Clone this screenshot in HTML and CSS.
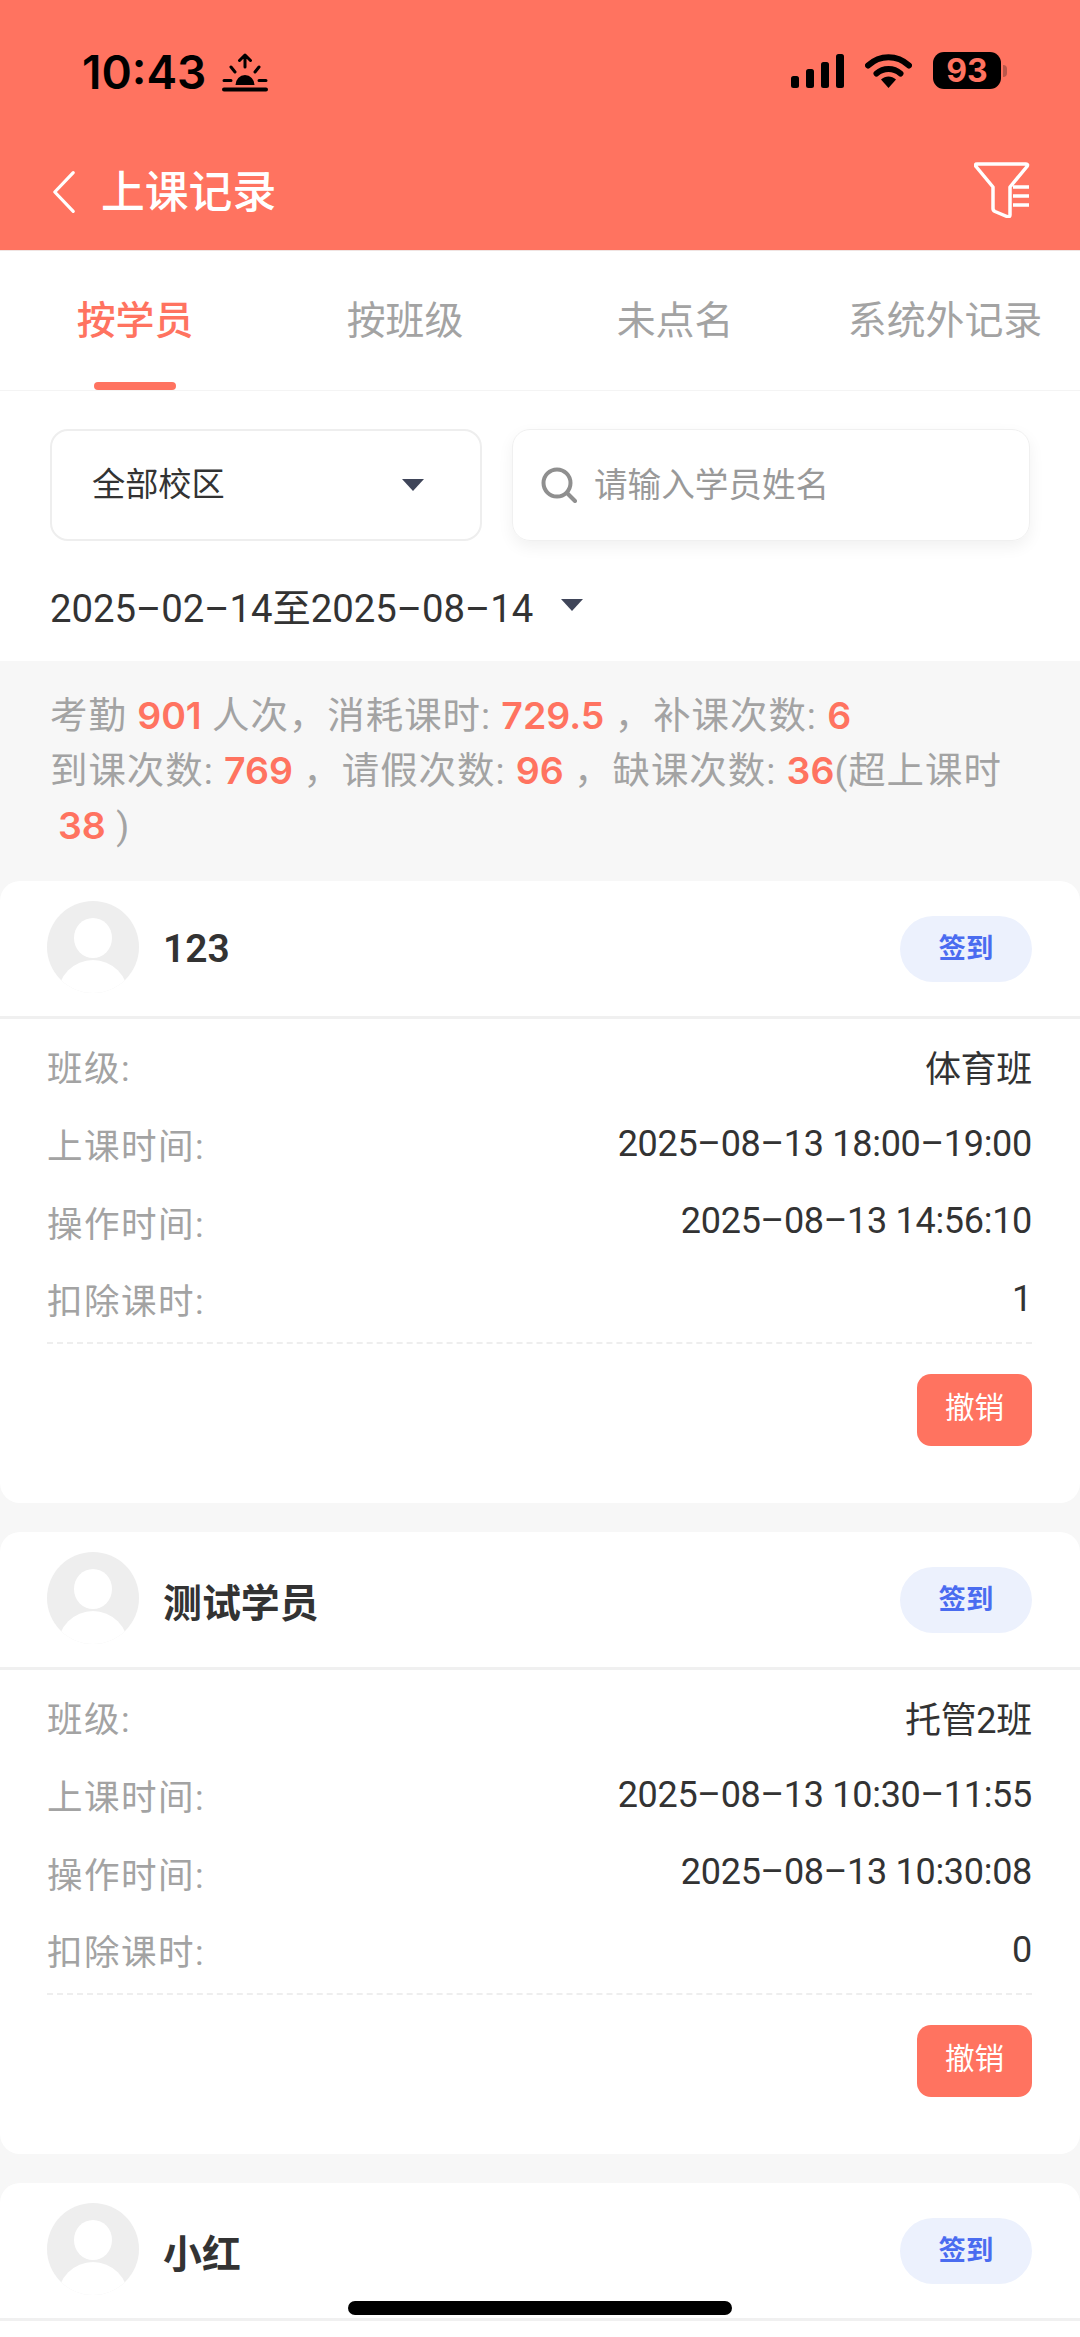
FILE: index.html
```html
<!DOCTYPE html>
<html lang="zh-CN">
<head>
  <meta charset="UTF-8">
  <meta name="viewport" content="width=device-width, initial-scale=1.0">
  <title>上课记录</title>
  <link rel="stylesheet" href="styles.css">
</head>
<body>
  <div id="page">
    <header class="top">
      <div class="status">
        <div class="status-left">
          <span class="clock">10:43</span>
          <svg class="sun" viewBox="0 0 46 39">
            <path d="M23 2v12M17.500 7.500L23 2l5.500 5.500M9 14l4 5M37 14l-4 5M2 27.500h7M37 27.500h7" fill="none" stroke="#000" stroke-width="3" stroke-linecap="round" stroke-linejoin="round"/>
            <path d="M13.500 32a9.500 10 0 0 1 19 0z" fill="#000"/>
            <rect x="0" y="34.500" width="46" height="4" rx="2" fill="#000"/>
          </svg>
        </div>
        <div class="status-right">
          <svg class="signal" viewBox="0 0 53 34">
            <rect x="0" y="22" width="8" height="12" rx="2.5"/>
            <rect x="15" y="15" width="8" height="19" rx="2.5"/>
            <rect x="30" y="8" width="8" height="26" rx="2.5"/>
            <rect x="45" y="0" width="8" height="34" rx="2.5"/>
          </svg>
          <svg class="wifi" viewBox="0 0 47 34">
            <path d="M3 11.500C15 .5 32 .5 44 11.500" fill="none" stroke="#000" stroke-width="6" stroke-linecap="round"/>
            <path d="M11.500 19.500C18.500 13.500 28.500 13.500 35.500 19.500" fill="none" stroke="#000" stroke-width="6" stroke-linecap="round"/>
            <path d="M16 25.500C20.500 21.500 26.500 21.500 31 25.500L23.500 34z" fill="#000"/>
          </svg>
          <div class="battery"><span class="battery-num">93</span></div>
          <span class="battery-nub"></span>
        </div>
      </div>
      <div class="nav">
        <div class="nav-left">
          <svg class="back" viewBox="0 0 26 46">
            <path d="M23 2L3 23l20 21" fill="none" stroke="#fff" stroke-width="3.500" stroke-linecap="round" stroke-linejoin="round"/>
          </svg>
          <span class="nav-title">上课记录</span>
        </div>
        <svg class="filter" viewBox="0 0 56 56">
          <path d="M3 2h49q2.500 0 1 2.500L36 25v28q0 2.500-3 1.500l-12-5q-2-1-2-3V25L2 4.500Q.5 2 3 2z" fill="none" stroke="#fff" stroke-width="3.500" stroke-linejoin="round"/>
          <path d="M39 25h16M39 34h16M39 43h16" fill="none" stroke="#fff" stroke-width="3.500"/>
        </svg>
      </div>
    </header>

    <ul class="tabs">
      <li class="tab active">按学员</li>
      <li class="tab">按班级</li>
      <li class="tab">未点名</li>
      <li class="tab">系统外记录</li>
    </ul>

    <div class="filters">
      <div class="select">
        <span>全部校区</span>
        <i class="caret"></i>
      </div>
      <div class="search">
        <svg class="search-icon" viewBox="0 0 36 36">
          <circle cx="16" cy="16" r="13.500" fill="none" stroke="#8f8f8f" stroke-width="4"/>
          <path d="M26 26l8 8" fill="none" stroke="#8f8f8f" stroke-width="4" stroke-linecap="round"/>
        </svg>
        <span>请输入学员姓名</span>
      </div>
    </div>

    <div class="date-row">
      <span>2025–02–14至2025–08–14</span>
      <i class="caret"></i>
    </div>

    <div class="content">
      <div class="summary">
        考勤 <b>901</b> 人次，消耗课时: <b>729.5</b> ，补课次数: <b>6</b><br>
        到课次数: <b>769</b> ，请假次数: <b>96</b> ，缺课次数: <b>36</b>(超上课时<br>
        <b class="first">38</b> )
      </div>

      <section class="card">
        <div class="card-head">
          <div class="avatar"><i class="avatar-head"></i><i class="avatar-body"></i></div>
          <span class="name">123</span>
          <span class="badge">签到</span>
        </div>
        <div class="card-body">
          <div class="row"><span class="label">班级:</span><span>体育班</span></div>
          <div class="row"><span class="label">上课时间:</span><span>2025–08–13 18:00–19:00</span></div>
          <div class="row"><span class="label">操作时间:</span><span>2025–08–13 14:56:10</span></div>
          <div class="row"><span class="label">扣除课时:</span><span>1</span></div>
        </div>
        <div class="card-foot"><span class="btn">撤销</span></div>
      </section>

      <section class="card">
        <div class="card-head">
          <div class="avatar"><i class="avatar-head"></i><i class="avatar-body"></i></div>
          <span class="name">测试学员</span>
          <span class="badge">签到</span>
        </div>
        <div class="card-body">
          <div class="row"><span class="label">班级:</span><span>托管2班</span></div>
          <div class="row"><span class="label">上课时间:</span><span>2025–08–13 10:30–11:55</span></div>
          <div class="row"><span class="label">操作时间:</span><span>2025–08–13 10:30:08</span></div>
          <div class="row"><span class="label">扣除课时:</span><span>0</span></div>
        </div>
        <div class="card-foot"><span class="btn">撤销</span></div>
      </section>

      <section class="card">
        <div class="card-head">
          <div class="avatar"><i class="avatar-head"></i><i class="avatar-body"></i></div>
          <span class="name">小红</span>
          <span class="badge">签到</span>
        </div>
      </section>
    </div>

    <div class="home-bar"></div>
  </div>
</body>
</html>
```

FILE: styles.css
```css
* {
  margin: 0;
  padding: 0;
  box-sizing: border-box;
}
li {
  list-style: none;
}
html, body {
  width: 1080px;
  height: 2337px;
  overflow: hidden;
  background: #fff;
}
body {
  font-family: Roboto, "Noto Sans CJK SC", sans-serif;
  color: #333;
}
#page {
  position: relative;
  height: 2337px;
  overflow: hidden;
}

/* header */
.top {
  height: 251px;
  background: #ff7360;
  border-bottom: 1px solid #f0e4e2;
}
.status {
  height: 144px;
  padding: 52px 73px 0 82px;
  display: flex;
  justify-content: space-between;
  align-items: flex-start;
}
.status-left {
  display: flex;
  align-items: center;
  gap: 16px;
}
.clock {
  font-family: Inter, sans-serif;
  font-size: 46px;
  line-height: 40px;
  font-weight: 600;
  color: #000;
}
.sun {
  width: 46px;
  height: 39px;
}
.status-right {
  display: flex;
  align-items: center;
}
.signal {
  width: 53px;
  height: 34px;
  fill: #000;
  margin-right: 21px;
}
.wifi {
  width: 47px;
  height: 34px;
  margin-right: 21px;
}
.battery {
  width: 68px;
  height: 37px;
  background: #000;
  border-radius: 11px;
  display: flex;
  align-items: center;
  justify-content: center;
}
.battery-num {
  font-family: Inter, sans-serif;
  font-size: 32px;
  line-height: 37px;
  font-weight: 700;
  color: #ff7360;
}
.battery-nub {
  width: 4px;
  height: 12px;
  margin-left: 2px;
  background: #b9564a;
  border-radius: 0 4px 4px 0;
}
.nav {
  height: 106px;
  padding: 0 50px 0 52px;
  display: flex;
  justify-content: space-between;
  align-items: flex-start;
}
.nav-left {
  display: flex;
  align-items: center;
  gap: 25px;
  margin-top: 24px;
}
.back {
  width: 24px;
  height: 46px;
}
.nav-title {
  font-size: 43.800px;
  line-height: 46px;
  padding-top: 2px;
  font-weight: 500;
  color: #fff;
}
.filter {
  width: 56px;
  height: 56px;
  margin-top: 18px;
}

/* tabs */
.tabs {
  display: flex;
  height: 140px;
  border-bottom: 1px solid #f4f4f4;
}
.tab {
  flex: 1;
  position: relative;
  text-align: center;
  font-size: 38.900px;
  line-height: 140px;
  color: #a3a3a3;
}
.tab.active {
  color: #ff7360;
  font-weight: 500;
}
.tab.active::after {
  content: "";
  position: absolute;
  left: 50%;
  bottom: 0;
  width: 82px;
  height: 8px;
  margin-left: -41px;
  border-radius: 4px;
  background: #ff7360;
}

/* filters */
.filters {
  display: flex;
  gap: 30px;
  padding: 38px 50px 0;
}
.select {
  width: 432px;
  height: 112px;
  padding: 0 56px 8px 40px;
  border: 2px solid #eeeeee;
  border-radius: 18px;
  display: flex;
  align-items: center;
  justify-content: space-between;
  font-size: 33.200px;
  color: #333;
}
.search {
  flex: 1;
  height: 112px;
  padding: 0 28px 0;
  border: 1px solid #f0f0f0;
  border-radius: 18px;
  box-shadow: 0 6px 16px rgba(0, 0, 0, 0.06);
  display: flex;
  align-items: center;
  gap: 17px;
  font-size: 33.600px;
  color: #999;
}
.search span {
  margin-bottom: 6px;
}
.search-icon {
  width: 36px;
  height: 36px;
}
.caret {
  width: 0;
  height: 0;
  border-left: 11px solid transparent;
  border-right: 11px solid transparent;
  border-top: 12px solid #3f4559;
}
.select .caret {
  margin-top: 8px;
}
.date-row {
  display: flex;
  align-items: center;
  gap: 28px;
  height: 120px;
  padding: 8px 50px 0;
  font-size: 38.300px;
  color: #333;
}

/* list */
.content {
  background: #f7f7f7;
}
.summary {
  padding: 28px 50px 27px;
  font-size: 37.440px;
  line-height: 55px;
  letter-spacing: 1px;
  color: #a3a3a3;
  white-space: nowrap;
}
.summary b {
  font-family: Inter, sans-serif;
  font-size: 37.500px;
  line-height: 1;
  letter-spacing: 0;
  color: #ff7360;
  font-weight: 600;
}
.summary .first {
  margin-left: 8px;
}
.card {
  height: 622px;
  margin-bottom: 29px;
  background: #fff;
  border-radius: 20px;
}
.card-head {
  height: 138px;
  padding: 0 48px 0 47px;
  display: flex;
  align-items: center;
  border-bottom: 3px solid #f0f0f0;
}
.avatar {
  position: relative;
  width: 92px;
  height: 92px;
  margin: -4px 24px 0 0;
  border-radius: 50%;
  overflow: hidden;
  background: #eeeeee;
  flex: none;
}
.avatar-head {
  position: absolute;
  left: 27px;
  top: 17px;
  width: 38px;
  height: 40px;
  border-radius: 50%;
  background: #fff;
}
.avatar-body {
  position: absolute;
  left: 11px;
  top: 59px;
  width: 70px;
  height: 70px;
  border-radius: 50%;
  background: #fff;
}
.name {
  flex: 1;
  font-size: 38.900px;
  font-weight: 600;
  color: #333;
}
.badge {
  width: 132px;
  height: 66px;
  border-radius: 33px;
  background: #ecf1fd;
  color: #4a6cf0;
  font-size: 27.400px;
  font-weight: 600;
  line-height: 66px;
  text-align: center;
}
.card-body {
  margin: 0 48px 0 47px;
  padding: 8px 0 4px;
  border-bottom: 2px dashed #eeeeee;
}
.row {
  height: 77.700px;
  display: flex;
  justify-content: space-between;
  align-items: center;
  font-size: 36px;
  letter-spacing: -0.3px;
  color: #333;
}
.label {
  font-size: 35.500px;
  letter-spacing: 1.500px;
  color: #a3a3a3;
}
.card-foot {
  display: flex;
  justify-content: flex-end;
  padding: 30px 48px 0 0;
}
.btn {
  width: 115px;
  height: 72px;
  border-radius: 14px;
  background: #ff7360;
  color: #fff;
  font-size: 29.600px;
  line-height: 68px;
  text-align: center;
}
.home-bar {
  position: absolute;
  left: 348px;
  top: 2301px;
  width: 384px;
  height: 14px;
  border-radius: 7px;
  background: #000;
}
```
